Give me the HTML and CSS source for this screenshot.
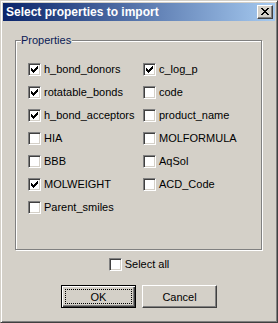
FILE: index.html
```html
<!DOCTYPE html>
<html lang="en">
<head>
    <meta charset="UTF-8">
    <title>Select properties to import</title>
    <link rel="stylesheet" href="styles.css">
</head>
<body>
    <div class="window">
        <div class="titlebar">
            <span class="title">Select properties to import</span>
            <span class="close">
                <svg width="8" height="7" viewBox="0 0 8 7" shape-rendering="crispEdges">
                    <path d="M0 0h2v1h-2zM6 0h2v1h-2zM1 1h2v1h-2zM5 1h2v1h-2zM2 2h4v1h-4zM3 3h2v1h-2zM2 4h4v1h-4zM1 5h2v1h-2zM5 5h2v1h-2zM0 6h2v1h-2zM6 6h2v1h-2z" fill="#000"/>
                </svg>
            </span>
        </div>

        <div class="content">
            <fieldset class="group">
                <legend>Properties</legend>
                <div class="props">
                    <label class="check"><span class="box checked"></span>h_bond_donors</label>
                    <label class="check"><span class="box checked"></span>rotatable_bonds</label>
                    <label class="check"><span class="box checked"></span>h_bond_acceptors</label>
                    <label class="check"><span class="box"></span>HIA</label>
                    <label class="check"><span class="box"></span>BBB</label>
                    <label class="check"><span class="box checked"></span>MOLWEIGHT</label>
                    <label class="check"><span class="box"></span>Parent_smiles</label>
                    <label class="check"><span class="box checked"></span>c_log_p</label>
                    <label class="check"><span class="box"></span>code</label>
                    <label class="check"><span class="box"></span>product_name</label>
                    <label class="check"><span class="box"></span>MOLFORMULA</label>
                    <label class="check"><span class="box"></span>AqSol</label>
                    <label class="check"><span class="box"></span>ACD_Code</label>
                </div>
            </fieldset>

            <div class="select-all">
                <label class="check"><span class="box"></span>Select all</label>
            </div>

            <div class="buttons">
                <button class="btn default"><span class="focus">OK</span></button>
                <button class="btn">Cancel</button>
            </div>
        </div>
    </div>

    <script>
        // draw the classic tick into every checked box
        document.querySelectorAll('.box.checked').forEach(box => {
            box.innerHTML = '<svg width="7" height="7" viewBox="0 0 7 7" shape-rendering="crispEdges">' +
                '<path d="M6 0h1v1h-1zM5 1h2v1h-2zM0 2h1v1h-1zM4 2h3v1h-3zM0 3h2v1h-2zM3 3h3v1h-3zM0 4h5v1h-5zM1 5h3v1h-3zM2 6h1v1h-1z" fill="#000"/>' +
                '</svg>';
        });
    </script>
</body>
</html>
```

FILE: styles.css
```css
/* classic dialog look */
body {
    margin: 0;
    font-family: 'Liberation Sans', Arial, sans-serif;
    font-size: 11px;
    color: #000;
    background: #d4d0c8;
}

.window {
    width: 278px;
    height: 323px;
    box-sizing: border-box;
    padding: 2px;
    background: #d4d0c8;
    border: 1px solid;
    border-color: #d4d0c8 #404040 #404040 #d4d0c8;
    box-shadow: inset 1px 1px 0 #fff, inset -1px -1px 0 #808080;
}

.titlebar {
    height: 18px;
    display: flex;
    align-items: center;
    justify-content: space-between;
    padding: 0 2px 0 3px;
    background: linear-gradient(to right, #0a246a, #a6caf0);
}

.title {
    color: #fff;
    font-weight: bold;
    font-size: 12px;
    line-height: 14px;
}

.close {
    width: 16px;
    height: 14px;
    box-sizing: border-box;
    display: flex;
    align-items: center;
    justify-content: center;
    background: #d4d0c8;
    border: 1px solid;
    border-color: #fff #404040 #404040 #fff;
    box-shadow: inset -1px -1px 0 #808080;
}

.close svg {
    display: block;
    margin: -1px 0 0 -1px;
}

.content {
    padding-top: 13px;
}

.group {
    width: 247px;
    box-sizing: border-box;
    margin: 0 0 0 12px;
    padding: 16px 0 35px 12px;
    border: 1px solid #808080;
    box-shadow: inset 1px 1px 0 #fff, 1px 1px 0 #fff;
}

.group legend {
    padding: 0 1px 0 0;
    margin-left: -7px;
    line-height: 13px;
    color: #0a1a55;
    background: #d4d0c8;
}

.props {
    display: grid;
    grid-template-columns: 115px 1fr;
    grid-template-rows: repeat(7, 13px);
    grid-auto-flow: column;
    row-gap: 10px;
}

.check {
    display: flex;
    align-items: center;
    gap: 3px;
    line-height: 13px;
    height: 13px;
    white-space: nowrap;
}

.box {
    width: 13px;
    height: 13px;
    box-sizing: border-box;
    flex: none;
    display: flex;
    align-items: center;
    justify-content: center;
    background: #fff;
    border: 1px solid;
    border-color: #808080 #fff #fff #808080;
    box-shadow: inset 1px 1px 0 #404040, inset -1px -1px 0 #d4d0c8;
}

.box svg {
    display: block;
}

.select-all {
    display: flex;
    justify-content: center;
    margin-top: 8px;
}

.buttons {
    display: flex;
    justify-content: center;
    gap: 6px;
    margin-top: 14px;
}

.btn {
    width: 75px;
    height: 23px;
    box-sizing: border-box;
    padding: 0;
    font-family: inherit;
    font-size: 11px;
    color: #000;
    background: #d4d0c8;
    border: 1px solid;
    border-color: #fff #404040 #404040 #fff;
    box-shadow: inset -1px -1px 0 #808080, inset 1px 1px 0 #d4d0c8;
}

.btn.default {
    border: 1px solid #000;
    box-shadow: inset 1px 1px 0 #fff, inset -1px -1px 0 #404040, inset -2px -2px 0 #808080;
    padding: 3px;
}

.focus {
    display: flex;
    align-items: center;
    justify-content: center;
    height: 100%;
    box-sizing: border-box;
    border: 1px dotted #000;
}
```
